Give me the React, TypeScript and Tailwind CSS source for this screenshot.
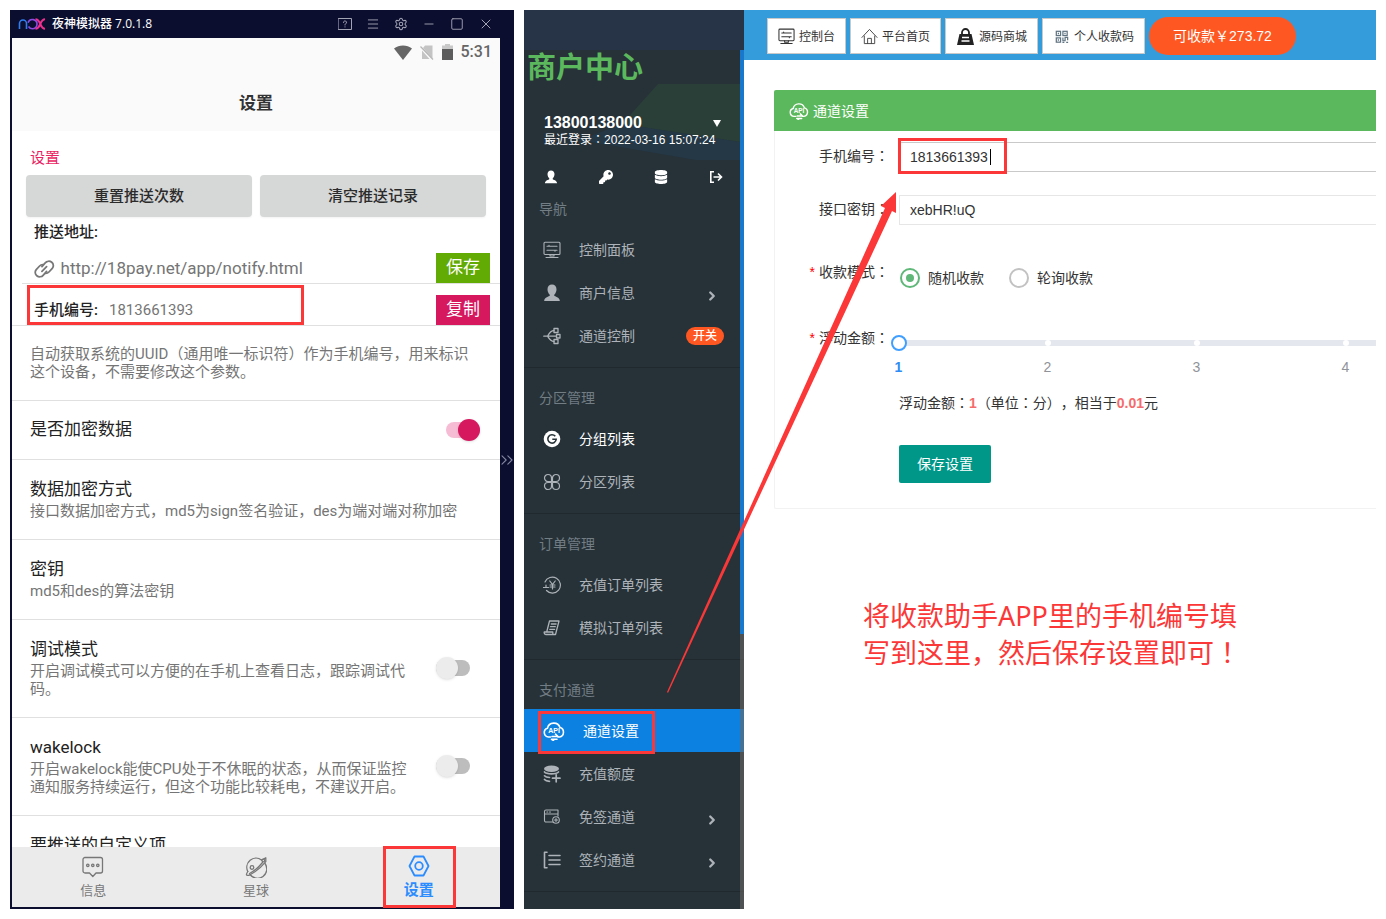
import { useState, type ReactNode } from "react";
import {
  ChevronRight,
  ChevronsRight,
  Menu,
  Minus,
  Settings,
  Square,
  X,
} from "lucide-react";
import { FaDatabase, FaKey } from "react-icons/fa";

interface IconProps {
  className?: string;
}

const strokeProps = {
  fill: "none",
  stroke: "currentColor",
  strokeLinecap: "round" as const,
  strokeLinejoin: "round" as const,
};

function NoxLogo() {
  return (
    <svg viewBox="0 0 28 12" className="h-3 w-7" fill="none" strokeWidth="1.600">
      <path d="M1.500 11V5.500a3.500 3.500 0 0 1 7 0V11" stroke="#2f7df0" />
      <path d="M10.500 8.500c1 1.500 2.300 2.200 3.800 2.200a4.600 4.600 0 1 0-4.300-6" stroke="#8a4ce0" />
      <path d="M17.500 1.200c2.500 0 3.300 1.300 4.800 4.800s2.300 4.800 4.700 4.800M27 1.200c-2.400 0-3.200 1.300-4.700 4.800s-2.300 4.800-4.800 4.800" stroke="#ee2f8d" strokeWidth="2" />
    </svg>
  );
}

function HelpBoxIcon({ className }: IconProps) {
  return (
    <svg viewBox="0 0 14 12" className={className} {...strokeProps} strokeWidth="1">
      <rect x=".5" y=".5" width="13" height="11" />
      <path d="M5.500 4.500a1.500 1.500 0 1 1 2.300 1.200c-.6.4-.8.7-.8 1.300M7 8.800v.2" />
    </svg>
  );
}

function WifiIcon() {
  return (
    <svg viewBox="0 0 18 15" className="h-[15px] w-[18px]" fill="#666">
      <path d="M0 3.500C5 -.6 13 -.6 18 3.500L9 15z" />
    </svg>
  );
}

function NoSimIcon() {
  return (
    <svg viewBox="0 0 14 15" className="h-[15px] w-3.5">
      <path d="M5 .5h7.500v13L3 3z" fill="#c4c4c4" />
      <path d="M2 5.500 9.500 14H2z" fill="#c4c4c4" />
      <path d="M.5 1.500 13 14.500" stroke="#b5b5b5" strokeWidth="1.200" />
    </svg>
  );
}

function BatteryIcon() {
  return (
    <svg viewBox="0 0 11 16" className="h-4 w-[11px]">
      <path d="M3 0h5v1.500h3V5H0V1.500h3z" fill="#c8c8c8" />
      <path d="M0 5h11v11H0z" fill="#5c5c5c" />
    </svg>
  );
}

function LinkIcon() {
  return (
    <svg viewBox="0 0 22 22" className="h-[22px] w-[22px] text-[#777]" {...strokeProps} strokeWidth="1.900">
      <path d="M8.500 8.500 12 4.500a5 5 0 0 1 7-.7 4.600 4.600 0 0 1 .6 6.600L16 14.200a4.600 4.600 0 0 1-3.500 1.500" />
      <path d="M13.500 13.500 10 17.500a5 5 0 0 1-7 .7 4.600 4.600 0 0 1-.6-6.600L6 7.800a4.600 4.600 0 0 1 3.500-1.500M8.500 13.500l5-5" />
    </svg>
  );
}

function MessageIcon() {
  return (
    <svg viewBox="0 0 22 22" className="h-[22px] w-[22px]" {...strokeProps} strokeWidth="1.300">
      <path d="M3 1.500h15.500a2 2 0 0 1 2 2V15a2 2 0 0 1-2 2H14l-3.200 3.500L7.500 17H3a2 2 0 0 1-2-2V3.500a2 2 0 0 1 2-2z" />
      <circle cx="5.800" cy="9.300" r="1.200" />
      <circle cx="10.800" cy="9.300" r="1.200" />
      <circle cx="15.800" cy="9.300" r="1.200" />
    </svg>
  );
}

function PlanetIcon() {
  return (
    <svg viewBox="0 0 22 22" className="h-[22px] w-[22px]" {...strokeProps} strokeWidth="1.300">
      <path d="M16.500 4A9.200 9.200 0 0 0 2.800 15.500M5 18.500A9.200 9.200 0 0 0 20 7.500" />
      <path d="M16.500 4l4.300-2.300v4C17 10.500 12 15 5 18.800c-1.800.8-3.300.9-3.500 0-.2-.8.400-2 1.300-3.300" />
      <path d="M17.500 6.500C14 11 10 14.500 4.500 17.500" />
      <circle cx="7" cy="11.500" r="1.800" />
      <circle cx="18.300" cy="4.500" r="1.300" />
    </svg>
  );
}

function HexNutIcon() {
  return (
    <svg viewBox="0 0 22 22" className="h-[22px] w-[22px]" {...strokeProps} strokeWidth="1.800">
      <path d="M6.500 1.500h9L20.500 11l-5 9.500h-9L1.500 11z" />
      <circle cx="11" cy="11" r="3.800" />
    </svg>
  );
}

function MonitorIcon({ className }: IconProps) {
  return (
    <svg viewBox="0 0 18 17" className={className} {...strokeProps} strokeWidth="1.100">
      <rect x="1" y=".7" width="16" height="12.300" rx="1" />
      <path d="M4 4.800h10M4 8.800h10M6 3.800v1M12 8.800v1M7 13v1.500h4V13M3 16h12" />
    </svg>
  );
}

function PersonIcon({ className }: IconProps) {
  return (
    <svg viewBox="0 0 16 16" className={className} fill="currentColor">
      <path d="M8 .5c2.400 0 4 1.700 4 4.200 0 2-.8 3.800-2 4.800v1c.6.6 4.600 1.300 5 4.500H1c.4-3.200 4.400-3.900 5-4.500v-1c-1.200-1-2-2.800-2-4.800C4 2.200 5.600.5 8 .5z" />
    </svg>
  );
}

function LogoutIcon({ className }: IconProps) {
  return (
    <svg viewBox="0 0 14 14" className={className} fill="none" stroke="currentColor" strokeWidth="1.600">
      <path d="M5 1.800H1.800v10.400H5M4.500 7h8M9 3.500 12.500 7 9 10.500" />
    </svg>
  );
}

function ChannelIcon({ className }: IconProps) {
  return (
    <svg viewBox="0 0 18 17" className={className} {...strokeProps} strokeWidth="1.300">
      <rect x="11" y="1" width="4" height="4" />
      <rect x="13.500" y="7" width="3.500" height="3.500" />
      <rect x="11" y="12" width="4" height="4" />
      <path d="M11 3C8 3 6.500 5 4.500 8.700 6.500 12 8 14 11 14M.8 8.700h12.700" />
    </svg>
  );
}

function GroupIcon({ className }: IconProps) {
  return (
    <svg viewBox="0 0 18 18" className={className}>
      <circle cx="9" cy="9" r="8.300" fill="currentColor" />
      <path d="M12.300 6.300A4.200 4.200 0 1 0 13.200 9.300H9.300" fill="none" stroke="#263238" strokeWidth="1.600" />
    </svg>
  );
}

function PetalsIcon({ className }: IconProps) {
  return (
    <svg viewBox="0 0 18 18" className={className} {...strokeProps} strokeWidth="1.200">
      <path d="M8.500 8.500H5A3.500 3.500 0 1 1 8.500 5zM9.500 8.500V5A3.500 3.500 0 1 1 13 8.500zM8.500 9.500V13A3.500 3.500 0 1 1 5 9.500zM9.500 9.500H13A3.500 3.500 0 1 1 9.500 13z" />
    </svg>
  );
}

function YuanIcon({ className }: IconProps) {
  return (
    <svg viewBox="0 0 18 18" className={className} {...strokeProps} strokeWidth="1.200">
      <path d="M2 6A8 8 0 1 1 3.500 14.500M.5 11.500h5M3 9v2.500" />
      <path d="M6.800 5 9.500 8.500 12.200 5M9.500 8.500V13M7 9h5M7 11h5" />
    </svg>
  );
}

function ReceiptIcon({ className }: IconProps) {
  return (
    <svg viewBox="0 0 18 18" className={className} {...strokeProps} strokeWidth="1.300">
      <path d="M6.500 2h9.500L12.500 15.500H3.200a2 2 0 0 1-2-2.500h8.600v2.500M6.500 2 3.700 13" />
      <path d="M8.300 5h4.800M7.500 7.700h4.800M6.800 10.400h4.800" />
    </svg>
  );
}

function CloudApiIcon({ className }: IconProps) {
  return (
    <svg viewBox="0 0 22 20" className={className} {...strokeProps} strokeWidth="1.600">
      <path d="M7.500 16H5.500A4.500 4.500 0 0 1 4.500 7.200 6.500 6.500 0 0 1 17 6.500 4.900 4.900 0 0 1 16.500 16h-1.500" />
      <path d="M9 15.500h6M12.500 13.200l2.500 2.300M14 18.300H8.500l2 1.200" />
      <text x="11" y="12" textAnchor="middle" fontSize="7" fontWeight="700" fontFamily="Liberation Sans, sans-serif" fill="currentColor" stroke="none">
        API
      </text>
    </svg>
  );
}

function CoinsPlusIcon({ className }: IconProps) {
  return (
    <svg viewBox="0 0 18 18" className={className} {...strokeProps} strokeWidth="1.700">
      <ellipse cx="8.500" cy="3.800" rx="7.500" ry="3.200" fill="currentColor" stroke="none" />
      <path d="M1.500 7c1 1.200 3 1.800 7 1.800 3.500 0 5.500-.4 7-1.800M1.500 10.800c1 1.200 2.500 1.600 5 1.700M1.500 14.500c1 1.200 2.500 1.700 5 1.800M9.500 13.200H17M13.200 9.800v7" />
    </svg>
  );
}

function WindowPlusIcon({ className }: IconProps) {
  return (
    <svg viewBox="0 0 18 18" className={className} {...strokeProps} strokeWidth="1.100">
      <path d="M9.500 14H3a1.500 1.500 0 0 1-1.500-1.500v-9A1.500 1.500 0 0 1 3 2h12v6M1.500 6H15M3.800 4h1M6.500 4h1" />
      <circle cx="13" cy="12" r="3.300" />
      <path d="M11.500 12h3M13 10.500v3" />
    </svg>
  );
}

function BracketListIcon({ className }: IconProps) {
  return (
    <svg viewBox="0 0 18 18" className={className} {...strokeProps} strokeWidth="1.600">
      <path d="M4 1.200H1.500v15.600H4M6 4.500h11M6 9h11M6 13.500h11" />
    </svg>
  );
}

function HomeIcon({ className }: IconProps) {
  return (
    <svg viewBox="0 0 18 17" className={className} {...strokeProps} strokeWidth="1">
      <path d="M1 9.500 9 1l8 8.500M3.500 8v8h11V8M7 16v-5.500h4V16" />
    </svg>
  );
}

function BagIcon({ className }: IconProps) {
  return (
    <svg viewBox="0 0 18 17" className={className}>
      <path d="M3 6h12l2.500 11H.5z" fill="#222" />
      <path d="M5.500 7V4.500a3.500 3.500 0 0 1 7 0V7" fill="none" stroke="#222" strokeWidth="1.800" />
      <path d="M5.500 9.500h7M5 13h8" stroke="#fff" strokeWidth="1.300" />
    </svg>
  );
}

function QrIcon({ className }: IconProps) {
  return (
    <svg viewBox="0 0 18 18" className={className} fill="none" stroke="currentColor" strokeWidth="1.300">
      <rect x="3.500" y="3.500" width="4.500" height="4.500" />
      <rect x="10.500" y="3.500" width="4.500" height="4.500" />
      <rect x="3.500" y="10.500" width="4.500" height="4.500" />
      <path d="M5.700 5v1.500M12.700 5v1.500M5.700 12v1.500M10.500 10v3.500h2.300V10h2.700v3M10 15.200h2M14 15.200h2" />
    </svg>
  );
}

// Full-width punctuation that sits in the middle of its cell
function Mid({ children }: { children: ReactNode }) {
  return <span className="leading-none font-['Noto_Sans_CJK_TC']">{children}</span>;
}

function Highlight({ className }: { className: string }) {
  return (
    <span
      aria-hidden="true"
      className={`pointer-events-none absolute z-10 border-3 border-[#fc3737] ${className}`}
    />
  );
}

function Toggle({ id, on }: { id: string; on: boolean }) {
  const [checked, setChecked] = useState(on);
  return (
    <input
      id={id}
      type="checkbox"
      role="switch"
      checked={checked}
      onChange={(e) => setChecked(e.target.checked)}
      className="relative h-[22px] w-[34px] shrink-0 appearance-none before:absolute before:top-[3px] before:right-0 before:left-0 before:h-4 before:rounded-full before:bg-[#bdbdbd] after:absolute after:top-0 after:left-0 after:h-[22px] after:w-[22px] after:rounded-full after:bg-[#ececec] after:shadow checked:before:bg-[#f6bcd3] checked:after:left-3 checked:after:bg-[#d6185f]"
    />
  );
}

const preferences = [
  {
    title: "数据加密方式",
    desc: "接口数据加密方式，md5为sign签名验证，des为端对端对称加密",
  },
  { title: "密钥", desc: "md5和des的算法密钥" },
  {
    id: "debug",
    title: "调试模式",
    desc: "开启调试模式可以方便的在手机上查看日志，跟踪调试代码。",
  },
  {
    id: "wakelock",
    title: "wakelock",
    desc: "开启wakelock能使CPU处于不休眠的状态，从而保证监控通知服务持续运行，但这个功能比较耗电，不建议开启。",
  },
  { title: "要推送的自定义项", desc: "" },
];

function PhoneWindow() {
  return (
    <section className="flex w-[504px] shrink-0 flex-col bg-[#0b0e2f] pb-0.5 pl-0.5 font-[Roboto,'Noto_Sans_CJK_SC',sans-serif]">
      <header className="flex h-7 shrink-0 items-center pr-5 pl-1.5 text-[#a2a3b3]">
        <NoxLogo />
        <h1 className="ml-1.5 text-xs font-medium text-white font-['Open_Sans','Noto_Sans_CJK_SC',sans-serif]">
          夜神模拟器 7.0.1.8
        </h1>
        <div className="ml-auto flex items-center gap-3.5">
          <button aria-label="帮助"><HelpBoxIcon className="h-3 w-3.5" /></button>
          <button aria-label="菜单"><Menu className="h-3.5 w-3.5" strokeWidth={1.6} /></button>
          <button aria-label="系统设置"><Settings className="h-3.5 w-3.5" strokeWidth={1.8} /></button>
          <button aria-label="最小化"><Minus className="h-3.5 w-3.5" strokeWidth={1.6} /></button>
          <button aria-label="最大化"><Square className="h-3.5 w-3.5" strokeWidth={1.6} rx={0} /></button>
          <button aria-label="关闭"><X className="h-4 w-4" strokeWidth={1.5} /></button>
        </div>
      </header>

      <div className="flex min-h-0 flex-1">
        <div className="flex min-w-0 flex-1 flex-col bg-white">
          <div className="h-[93px] shrink-0 bg-[#fafafa]">
            <div className="flex h-7 items-center justify-end gap-2 pr-2">
              <WifiIcon />
              <NoSimIcon />
              <BatteryIcon />
              <span className="text-base font-medium text-[#666]">5:31</span>
            </div>
            <h2 className="pt-[26px] text-center text-[17px] leading-[22px] font-bold text-[#333]">
              设置
            </h2>
          </div>

          <div className="min-h-0 flex-1 overflow-hidden">
            <h3 className="px-[18px] pt-4 pb-1.5 text-[15px] leading-[22px] text-[#e91e63]">
              设置
            </h3>
            <div className="grid grid-cols-2 gap-2 px-3.5 text-[15px] font-medium text-[#2b2b2b]">
              <button className="h-[42px] rounded-sm bg-[#d6d7d7] shadow-xs">重置推送次数</button>
              <button className="h-[42px] rounded-sm bg-[#d6d7d7] shadow-xs">清空推送记录</button>
            </div>
            <label htmlFor="push-url" className="block px-[22px] text-[15px] leading-[30px] font-medium text-[#222]">
              推送地址:
            </label>
            <div className="ml-2.5 flex h-[37px] items-end border-b border-[#e0e0e0] pr-2.5">
              <div className="flex h-[30px] min-w-0 flex-1 items-center gap-1.5 pt-0.5 pl-3">
                <LinkIcon />
                <input
                  id="push-url"
                  defaultValue="http://18pay.net/app/notify.html"
                  className="w-full min-w-0 text-[17px] text-[#757575] outline-none"
                />
              </div>
              <button className="h-[30px] w-[54px] bg-[#62aa04] text-[17px] text-white">保存</button>
            </div>
            <div className="relative flex h-[42px] items-end border-b border-[#e0e0e0] pr-2.5 pl-[22px]">
              <div className="flex h-[30px] flex-1 items-center text-[15px]">
                <span className="w-[75px] font-medium text-[#222]">手机编号:</span>
                <span className="text-[#757575]">1813661393</span>
              </div>
              <button className="h-[30px] w-[54px] bg-[#d6185f] text-[17px] text-white">复制</button>
              <Highlight className="top-px left-[15px] h-10 w-[277px]" />
            </div>
            <p className="border-b border-[#e0e0e0] px-[18px] py-[19px] text-[15px] leading-[18px] text-[#757575]">
              自动获取系统的UUID（通用唯一标识符）作为手机编号，用来标识
              <br />
              这个设备，不需要修改这个参数。
            </p>
            <div className="flex h-[59px] items-center justify-between border-b border-[#e0e0e0] pr-5 pl-[18px] text-[17px] text-[#222]">
              <label htmlFor="encrypt">是否加密数据</label>
              <Toggle id="encrypt" on />
            </div>
            {preferences.map((item) => (
              <div
                key={item.title}
                className="flex items-center justify-between border-b border-[#e0e0e0] pt-[18px] pr-[30px] pb-[19px] pl-[18px]"
              >
                <div className={item.id ? "w-[386px]" : "w-full"}>
                  <label htmlFor={item.id} className="block text-[17px] leading-[22px] text-[#222]">
                    {item.title}
                  </label>
                  <p className="mt-0.5 text-[15px] leading-[18px] text-[#757575]">{item.desc}</p>
                </div>
                {item.id && <Toggle id={item.id} on={false} />}
              </div>
            ))}
          </div>

          <nav className="grid h-[60px] shrink-0 grid-cols-3 bg-[#ebebeb] text-[13px] text-[#777]">
            <a href="#message" className="flex flex-col items-center gap-0.5 pt-[9px]">
              <MessageIcon />
              <span className="leading-[22px]">信息</span>
            </a>
            <a href="#planet" className="flex flex-col items-center gap-0.5 pt-[9px]">
              <PlanetIcon />
              <span className="leading-[22px]">星球</span>
            </a>
            <a href="#settings" className="relative flex flex-col items-center gap-0.5 pt-2 text-[15px] font-bold text-[#2b8cff]">
              <HexNutIcon />
              <span className="leading-[22px]">设置</span>
              <Highlight className="-inset-y-px left-[46px] w-[73px]" />
            </a>
          </nav>
        </div>
        <div className="flex w-3.5 items-center justify-center pb-[26px] text-[#8587a0]">
          <ChevronsRight className="h-5 w-5 shrink-0" strokeWidth={1.3} />
        </div>
      </div>
    </section>
  );
}

interface MenuItem {
  label: string;
  icon: (props: IconProps) => ReactNode;
  tone?: "white" | "active";
  arrow?: boolean;
  badge?: string;
}

const menuGroups: { title: string; items: MenuItem[] }[] = [
  {
    title: "导航",
    items: [
      { label: "控制面板", icon: MonitorIcon },
      { label: "商户信息", icon: PersonIcon, arrow: true },
      { label: "通道控制", icon: ChannelIcon, badge: "开关" },
    ],
  },
  {
    title: "分区管理",
    items: [
      { label: "分组列表", icon: GroupIcon, tone: "white" },
      { label: "分区列表", icon: PetalsIcon },
    ],
  },
  {
    title: "订单管理",
    items: [
      { label: "充值订单列表", icon: YuanIcon },
      { label: "模拟订单列表", icon: ReceiptIcon },
    ],
  },
  {
    title: "支付通道",
    items: [
      { label: "通道设置", icon: CloudApiIcon, tone: "active" },
      { label: "充值额度", icon: CoinsPlusIcon },
      { label: "免签通道", icon: WindowPlusIcon, arrow: true },
      { label: "签约通道", icon: BracketListIcon, arrow: true },
    ],
  },
];

function SidebarItem({ item }: { item: MenuItem }) {
  const Icon = item.icon;
  const active = item.tone === "active";
  const tone = active
    ? "bg-[#0c81e1] text-white"
    : item.tone === "white"
      ? "text-white"
      : "text-[#adb3b8]";
  return (
    <li>
      <a href="#menu" className={`relative flex h-[43px] items-center gap-[18px] pr-5 pl-[19px] text-sm ${tone}`}>
        <Icon className={active ? "h-5 w-[22px] shrink-0" : "h-[18px] w-[18px] shrink-0"} />
        <span>{item.label}</span>
        {item.arrow && <ChevronRight className="mt-1.5 ml-auto h-3.5 w-6" strokeWidth={4} />}
        {item.badge && (
          <span className="ml-auto h-[18px] rounded-full bg-[#ff5722] px-[7px] text-xs leading-[18px] font-medium text-white">
            {item.badge}
          </span>
        )}
        {active && <Highlight className="top-0.5 left-3.5 h-[43px] w-[117px]" />}
      </a>
    </li>
  );
}

function Sidebar() {
  return (
    <aside className="flex w-[220px] shrink-0 flex-col bg-[#263238]">
      <div className="h-10 shrink-0 bg-[#273346]" />
      <div className="relative min-h-0 flex-1 overflow-hidden">
        <svg viewBox="0 0 216 150" className="absolute top-0 left-0 h-[150px] w-[216px]">
          <path d="M134 34h82v58L98 74z" fill="#2a3f38" />
          <path d="M98 74l118 18v18H172L56 90z" fill="#233b4d" opacity=".7" />
        </svg>
        <div className="relative">
          <div className="pl-[3px] text-[29px] leading-9 font-bold text-[#5cb85c]">商户中心</div>
          <div className="mt-7 flex items-center pr-[22px] pl-5 text-white">
            <strong className="text-base leading-[18px]">13800138000</strong>
            <button aria-label="账户菜单" className="ml-auto">
              <svg viewBox="0 0 10 7" className="h-[7px] w-2.5" fill="currentColor">
                <path d="M1 0h8L5 7z" />
              </svg>
            </button>
          </div>
          <p className="pl-5 text-xs leading-4 whitespace-nowrap text-white">
            最近登录<Mid>：</Mid>2022-03-16 15:07:24
          </p>
          <div className="mt-[21px] mb-3.5 flex h-4 items-center justify-between pr-[21px] pl-5 text-white">
            <button aria-label="个人资料"><PersonIcon className="h-3.5 w-3.5" /></button>
            <button aria-label="修改密码"><FaKey className="h-3.5 w-3.5" /></button>
            <button aria-label="资金"><FaDatabase className="h-3.5 w-3.5" /></button>
            <button aria-label="退出登录"><LogoutIcon className="h-3.5 w-3.5" /></button>
          </div>
        </div>
        <nav>
          {menuGroups.map((group, index) => (
            <div key={group.title} className="border-b border-[#20292e]">
              <h3 className={`px-[15px] pb-[9px] text-sm leading-5 text-[#727d84] ${index > 0 ? "pt-5" : ""}`}>
                {group.title}
              </h3>
              <ul className="pb-[10px]">
                {group.items.map((item) => (
                  <SidebarItem key={item.label} item={item} />
                ))}
              </ul>
            </div>
          ))}
        </nav>
        <div className="absolute inset-y-0 right-0 w-1 bg-[#6b6864]/60">
          <div className="h-[68%] bg-[#1878cc]" />
        </div>
      </div>
    </aside>
  );
}

const shortcuts = [
  { label: "控制台", icon: <MonitorIcon className="h-[17px] w-[17px] text-[#333]" /> },
  { label: "平台首页", icon: <HomeIcon className="h-[17px] w-[17px] text-[#444]" /> },
  { label: "源码商城", icon: <BagIcon className="h-[17px] w-[19px]" /> },
  { label: "个人收款码", icon: <QrIcon className="h-[17px] w-[17px] text-[#5f7280]" /> },
];

function FieldLabel({ htmlFor, required, children }: { htmlFor?: string; required?: boolean; children: ReactNode }) {
  return (
    <label htmlFor={htmlFor} className="h-[30px] w-[124px] shrink-0 pr-2.5 text-right leading-[28px] whitespace-nowrap">
      {required && <span className="mr-1 text-[#f00]">*</span>}
      {children}
      <Mid>：</Mid>
    </label>
  );
}

function ChannelForm() {
  const [mode, setMode] = useState("random");
  const [amount, setAmount] = useState(1);

  return (
    <form className="pt-[11px] pb-[25px] text-sm text-[#333]" onSubmit={(e) => e.preventDefault()}>
      <div className="flex">
        <FieldLabel htmlFor="phone-no">手机编号</FieldLabel>
        <div className="relative flex-1">
          <input
            id="phone-no"
            defaultValue="1813661393"
            className="h-[30px] w-full border border-[#c9c9c9] bg-white pl-2.5 outline-none"
          />
          <Highlight className="-top-1 -left-px h-9 w-[109px]" />
          <span className="absolute top-[7px] left-[91px] h-4 w-px bg-black" />
        </div>
      </div>
      <div className="mt-[23px] flex">
        <FieldLabel htmlFor="secret">接口密钥</FieldLabel>
        <input
          id="secret"
          defaultValue="xebHR!uQ"
          className="h-[30px] flex-1 border border-[#e6e6e6] bg-white pl-2.5 outline-none"
        />
      </div>
      <div className="mt-[33px] flex">
        <FieldLabel required>收款模式</FieldLabel>
        <div className="flex h-10 items-center gap-6">
          {[
            { value: "random", label: "随机收款" },
            { value: "rotate", label: "轮询收款" },
          ].map((opt) => (
            <label key={opt.value} className="flex items-center gap-2">
              <input
                type="radio"
                name="mode"
                checked={mode === opt.value}
                onChange={() => setMode(opt.value)}
                className="ml-px flex h-5 w-5 appearance-none items-center justify-center rounded-full border-2 border-[#c2c2c2] before:h-2 before:w-2 before:rounded-full checked:border-[#5fb878] checked:before:bg-[#5fb878]"
              />
              {opt.label}
            </label>
          ))}
        </div>
      </div>
      <div className="mt-[26px] flex">
        <FieldLabel htmlFor="float-amount" required>浮动金额</FieldLabel>
        <div className="w-[596px] shrink-0 pt-4">
          <div className="relative h-1.5 bg-[#e4e7ed]">
            <div className="-ml-[75px] flex">
              {[1, 2, 3, 4].map((n) => (
                <span key={n} className="flex w-[149px] shrink-0 justify-center">
                  <span className="h-1.5 w-1.5 rounded-full bg-white" />
                </span>
              ))}
            </div>
            <input
              id="float-amount"
              type="range"
              min={1}
              max={5}
              value={amount}
              onChange={(e) => setAmount(Number(e.target.value))}
              className="absolute -top-[5px] -left-2 h-4 w-[612px] appearance-none bg-transparent [&::-webkit-slider-thumb]:h-4 [&::-webkit-slider-thumb]:w-4 [&::-webkit-slider-thumb]:appearance-none [&::-webkit-slider-thumb]:rounded-full [&::-webkit-slider-thumb]:border-2 [&::-webkit-slider-thumb]:border-[#409eff] [&::-webkit-slider-thumb]:bg-white"
            />
          </div>
          <div className="mt-[11px] -ml-[75px] flex leading-5 text-[#909399]">
            {[1, 2, 3, 4].map((n) => (
              <span
                key={n}
                className={`w-[149px] shrink-0 text-center ${n === amount ? "font-bold text-[#2f8cf5]" : ""}`}
              >
                {n}
              </span>
            ))}
          </div>
          <p className="mt-4 leading-5 [text-spacing-trim:space-all]">
            浮动金额<Mid>：</Mid>
            <b className="text-[#f56c6c]">{amount}</b>
            <Mid>（</Mid>单位<Mid>：</Mid>分<Mid>）</Mid>，相当于
            <b className="text-[#f56c6c]">{(amount / 100).toFixed(2)}</b>元
          </p>
          <button type="submit" className="mt-8 h-[38px] rounded-xs bg-[#009688] px-[18px] text-white">
            保存设置
          </button>
        </div>
      </div>
    </form>
  );
}

function Arrow() {
  return (
    <svg
      aria-hidden="true"
      viewBox="0 0 230 501"
      className="pointer-events-none absolute top-[182px] left-[143px] z-20 h-[501px] w-[230px]"
      fill="#fc3737"
    >
      <path d="M229 0v21l-4-2L1 501l-1-1L218 16l-4-2z" />
    </svg>
  );
}

export default function App() {
  return (
    <div className="flex h-screen gap-2.5 bg-white p-2.5">
      <PhoneWindow />
      <section className="relative flex min-w-0 flex-1 overflow-hidden font-['Liberation_Sans','Noto_Sans_CJK_SC',sans-serif]">
        <Sidebar />
        <main className="min-w-0 flex-1 overflow-hidden">
          <header className="flex h-[50px] items-center gap-1 bg-[#349cdb] pt-0.5 pl-[23px]">
            {shortcuts.map((s) => (
              <button
                key={s.label}
                className="flex h-9 shrink-0 items-center gap-1 border border-[#c9c9c9] bg-white px-2.5 text-xs text-[#333]"
              >
                {s.icon}
                <span className="pt-0.5">{s.label}</span>
              </button>
            ))}
            <button className="h-[38px] shrink-0 rounded-full bg-[#ff5722] px-6 text-sm text-white">
              可收款￥273.72
            </button>
          </header>
          <div className="mt-[30px] -mr-4 ml-[30px] rounded-xs border-b border-l border-[#f2f2f2]">
            <h2 className="-ml-px flex h-[41px] items-center gap-1 rounded-tl-xs bg-[#5cb85c] pl-[15px] text-sm text-white">
              <CloudApiIcon className="h-[18px] w-5" />
              通道设置
            </h2>
            <ChannelForm />
          </div>
          <p className="mt-[88px] ml-[119px] text-[27px] leading-[37px] text-[#fc3737] font-['Noto_Sans','Noto_Sans_CJK_SC',sans-serif]">
            将收款助手APP里的手机编号填
            <br />
            写到这里，然后保存设置即可<Mid>！</Mid>
          </p>
        </main>
        <Arrow />
      </section>
    </div>
  );
}
